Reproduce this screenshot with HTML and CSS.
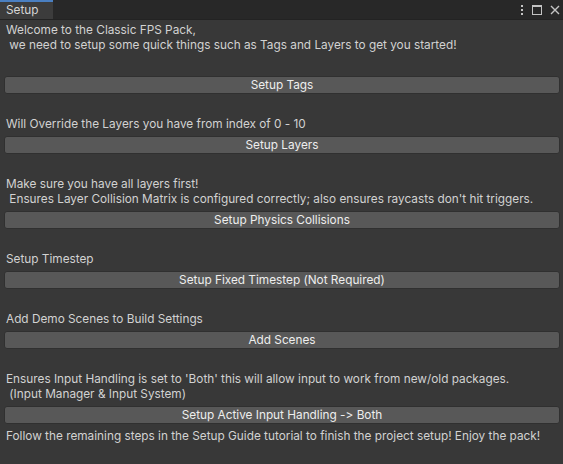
FILE: index.html
```html
<!DOCTYPE html>
<html>
<head>
<meta charset="utf-8">
<link rel="stylesheet" href="styles.css">
</head>
<body>
<div class="window">
  <div class="tabbar">
    <div class="tab">Setup</div>
    <div class="tabtools">
      <svg class="ico" width="6" height="12" viewBox="0 0 6 12"><rect x="2" y="1" width="2" height="2" fill="#c4c4c4"/><rect x="2" y="5" width="2" height="2" fill="#c4c4c4"/><rect x="2" y="9" width="2" height="2" fill="#c4c4c4"/></svg>
      <svg class="ico" width="12" height="12" viewBox="0 0 12 12"><rect x="1.5" y="1.5" width="9" height="9" fill="none" stroke="#c4c4c4"/><rect x="1" y="1" width="10" height="2" fill="#c4c4c4"/></svg>
      <svg class="ico" width="12" height="12" viewBox="0 0 12 12"><path d="M2 2 L10 10 M10 2 L2 10" stroke="#c4c4c4" stroke-width="1.4"/></svg>
    </div>
  </div>
  <div class="content">
    <div class="label">Welcome to the Classic FPS Pack,<br>&nbsp;we need to setup some quick things such as Tags and Layers to get you started!</div>
    <div class="button first">Setup Tags</div>

    <div class="label sec">Will Override the Layers you have from index of 0 - 10</div>
    <div class="button">Setup Layers</div>

    <div class="label sec">Make sure you have all layers first!<br>&nbsp;Ensures Layer Collision Matrix is configured correctly; also ensures raycasts don't hit triggers.</div>
    <div class="button">Setup Physics Collisions</div>

    <div class="label sec">Setup Timestep</div>
    <div class="button">Setup Fixed Timestep (Not Required)</div>

    <div class="label sec">Add Demo Scenes to Build Settings</div>
    <div class="button">Add Scenes</div>

    <div class="label sec">Ensures Input Handling is set to 'Both' this will allow input to work from new/old packages.<br>&nbsp;(Input Manager &amp; Input System)</div>
    <div class="button">Setup Active Input Handling -&gt; Both</div>

    <div class="label last">Follow the remaining steps in the Setup Guide tutorial to finish the project setup! Enjoy the pack!</div>
  </div>
</div>
</body>
</html>
```
FILE: styles.css
```css
* { box-sizing: border-box; }
html, body {
  margin: 0;
  padding: 0;
  background: #383838;
}
body {
  font-family: Inter, "Noto Sans", sans-serif;
  font-size: 11.8px;
  font-feature-settings: "calt" 0, "liga" 0;
  color: #d2d2d2;
  width: 563px;
  height: 464px;
  overflow: hidden;
}
.window {
  display: flex;
  flex-direction: column;
  height: 464px;
}
.tabbar {
  height: 20px;
  background: #282828;
  display: flex;
  align-items: stretch;
  border-bottom: 1px solid #232323;
}
.tab {
  width: 53px;
  background: #3c3c3c;
  border-top: 2px solid #4a7fc1;
  padding-left: 6px;
  line-height: 17px;
  color: #d6d6d6;
}
.tabtools {
  margin-left: auto;
  display: flex;
  align-items: center;
  gap: 6px;
  padding-right: 2px;
}
.ico { display: block; }
.content {
  padding-top: 3px;
}
.label {
  line-height: 15px;
  padding-left: 6px;
  white-space: nowrap;
}
.sec { margin-top: 23px; }
.last { margin-top: 5px; }
.button {
  height: 18px;
  margin: 4px 3px 0 4px;
  background: #585858;
  border: 1px solid #303030;
  border-radius: 3px;
  color: #eeeeee;
  text-align: center;
  line-height: 16px;
}
.button.first { margin-top: 23px; }
```
